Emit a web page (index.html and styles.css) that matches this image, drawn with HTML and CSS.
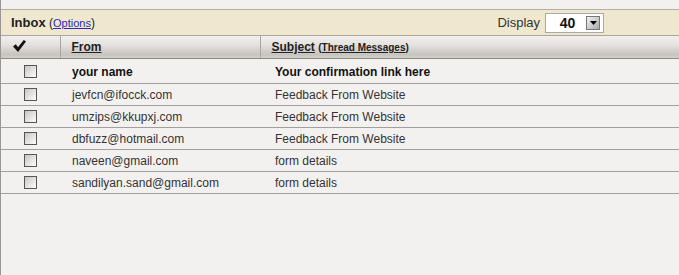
FILE: index.html
```
<!DOCTYPE html>
<html lang="en">
<head>
    <meta charset="UTF-8"/>
    <title>Inbox</title>
    <link rel="stylesheet" href="styles.css">
</head>
<body>
    <div class="topbar"></div>

    <div class="inbox-bar">
        <div class="inbox-title"><b>Inbox</b> (<a href="javascript:void(0)">Options</a>)</div>
        <div class="display">
            <span>Display</span>
            <div class="select">
                <span class="select-value">40</span>
                <span class="select-btn">
                    <svg width="7" height="4" viewBox="0 0 7 4"><path d="M0 0H7L3.5 4Z" fill="#000"/></svg>
                </span>
            </div>
        </div>
    </div>

    <table class="mail-list">
        <colgroup>
            <col class="col-check"/>
            <col class="col-from"/>
            <col/>
        </colgroup>
        <thead>
            <tr>
                <th>
                    <svg width="13" height="12" viewBox="0 0 13 12"><path d="M0 6.5 L2.8 4.3 L5 7.2 L10.8 0 L13 1.6 L5 12 Z" fill="#111"/></svg>
                </th>
                <th><a href="javascript:void(0)">From</a></th>
                <th><a href="javascript:void(0)">Subject</a> <small>(<a href="javascript:void(0)">Thread Messages</a>)</small></th>
            </tr>
        </thead>
        <tbody>
            <tr class="unread">
                <td><span class="checkbox"></span></td>
                <td>your name</td>
                <td>Your confirmation link here</td>
            </tr>
            <tr>
                <td><span class="checkbox"></span></td>
                <td>jevfcn@ifocck.com</td>
                <td>Feedback From Website</td>
            </tr>
            <tr>
                <td><span class="checkbox"></span></td>
                <td>umzips@kkupxj.com</td>
                <td>Feedback From Website</td>
            </tr>
            <tr>
                <td><span class="checkbox"></span></td>
                <td>dbfuzz@hotmail.com</td>
                <td>Feedback From Website</td>
            </tr>
            <tr>
                <td><span class="checkbox"></span></td>
                <td>naveen@gmail.com</td>
                <td>form details</td>
            </tr>
            <tr>
                <td><span class="checkbox"></span></td>
                <td>sandilyan.sand@gmail.com</td>
                <td>form details</td>
            </tr>
        </tbody>
    </table>
</body>
</html>
```

FILE: styles.css
```
html, body {
    height: 100%;
}

body {
    margin: 0;
    padding: 0;
    font-family: 'Liberation Sans', Arial, sans-serif;
    background-color: #f3f1ef;
    border-left: 1px solid #9b9691;
    box-sizing: border-box;
}

.topbar {
    height: 9px;
    border-bottom: 1px solid #b3aea8;
    background-color: #f3f1ef;
}

.inbox-bar {
    display: flex;
    justify-content: space-between;
    align-items: center;
    height: 25px;
    padding: 0 75px 0 10px;
    background-color: #efe8cf;
    border-bottom: 1px solid #aaa59d;
    font-size: 12px;
    color: #222;
}

.inbox-title b {
    font-size: 13px;
}

.inbox-title a {
    color: #2a2ab8;
    font-size: 11px;
}

.display {
    display: flex;
    align-items: center;
    gap: 5px;
    font-size: 13px;
    color: #333;
}

.select {
    display: flex;
    align-items: center;
    width: 57px;
    height: 18px;
    background-color: #fff;
    border: 1px solid #a9a9a9;
}

.select-value {
    flex: 1;
    padding-left: 3px;
    text-align: center;
    font-weight: bold;
    font-size: 14px;
    color: #111;
}

.select-btn {
    display: flex;
    align-items: center;
    justify-content: center;
    width: 12px;
    height: 12px;
    margin-right: 3px;
    border: 1px solid #777;
    background: linear-gradient(135deg, #f4f4f4, #a9a9a9);
}

.mail-list {
    width: 100%;
    table-layout: fixed;
    border-collapse: collapse;
    font-size: 12px;
}

.mail-list col.col-check {
    width: 59px;
}

.mail-list col.col-from {
    width: 200px;
}

.mail-list th {
    height: 22px;
    padding: 0 0 0 11px;
    text-align: left;
    font-size: 12px;
    font-weight: bold;
    color: #222;
    background: linear-gradient(#f2f0ee, #e4e1de 40%, #c7c3bf 85%, #d2ceca);
    border-bottom: 1px solid #8f8a85;
    border-left: 1px solid #a9a5a0;
}

.mail-list th:first-child {
    border-left: none;
    padding-left: 12px;
}

.mail-list th a {
    color: #222;
}

.mail-list th small {
    font-size: 10px;
}

.mail-list td {
    height: 21px;
    padding: 0 0 0 12px;
    color: #333;
    border-bottom: 1px solid #a39e99;
}

.mail-list td:first-child {
    padding-left: 23px;
}

.mail-list td:last-child {
    padding-left: 15px;
}

.mail-list tr.unread td {
    height: 23px;
    padding-top: 1px;
    font-weight: bold;
    color: #111;
}

.checkbox {
    display: block;
    width: 11px;
    height: 11px;
    border: 1px solid #555;
    background: linear-gradient(135deg, #c8c6c4, #fdfdfd);
}
```
